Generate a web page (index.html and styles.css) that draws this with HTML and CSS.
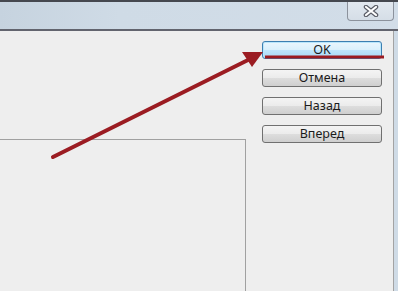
FILE: index.html
```html
<!DOCTYPE html>
<html lang="ru">
<head>
    <meta charset="UTF-8">
    <title>Диалог</title>
    <link rel="stylesheet" href="styles.css">
</head>
<body>
    <div class="window">
        <div class="titlebar">
            <button class="close-btn" aria-label="Закрыть">
                <svg width="16" height="12" viewBox="0 0 16 12">
                    <path d="M3 2 L13 10 M13 2 L3 10" stroke="#595c66" stroke-width="4.5" stroke-linecap="round"/>
                    <path d="M3 2 L13 10 M13 2 L3 10" stroke="#ffffff" stroke-width="2.2" stroke-linecap="round"/>
                </svg>
            </button>
        </div>
        <div class="content">
            <div class="left">
                <div class="panel"></div>
            </div>
            <div class="actions">
                <button class="btn btn-default">OK</button>
                <button class="btn">Отмена</button>
                <button class="btn">Назад</button>
                <button class="btn">Вперед</button>
            </div>
        </div>
    </div>

    <!-- стрелка-пометка поверх окна -->
    <svg class="annotation" width="398" height="291" viewBox="0 0 398 291">
        <line x1="265" y1="57" x2="384" y2="57" stroke="#9b1c22" stroke-width="3"/>
        <line x1="53" y1="157" x2="248" y2="60" stroke="#9b1c22" stroke-width="4" stroke-linecap="round"/>
        <polygon points="263,52 242,52 252,67" fill="#9b1c22"/>
    </svg>
</body>
</html>
```

FILE: styles.css
```css
body {
    margin: 0;
    width: 398px;
    height: 291px;
    overflow: hidden;
    font-family: "Noto Sans", Arial, sans-serif;
    background-color: #cfdbe6;
    position: relative;
}

.window {
    display: flex;
    flex-direction: column;
    height: 100%;
}

.titlebar {
    height: 27px;
    border-top: 2px solid #45484f;
    border-bottom: 2px solid #62646e;
    background: linear-gradient(90deg, #c6d3df 0%, #cfdbe6 30%, #d2dde8 100%);
    display: flex;
    justify-content: flex-end;
    padding-right: 4px;
}

.close-btn {
    width: 47px;
    height: 19px;
    padding: 0;
    border: 1px solid #8c929c;
    border-top: none;
    border-radius: 0 0 4px 4px;
    background: linear-gradient(#e2e8ef, #d5dee7);
    display: flex;
    align-items: center;
    justify-content: center;
}

.content {
    flex: 1;
    display: flex;
    background-color: #eeeeee;
    width: 393px;
    border-right: 1px solid #a3a3a3;
}

.left {
    width: 246px;
    padding-top: 108px;
}

.panel {
    height: 100%;
    border-top: 1px solid #a0a0a0;
    border-right: 1px solid #a0a0a0;
    margin-left: -1px;
}

.actions {
    display: flex;
    flex-direction: column;
    gap: 10px;
    padding-top: 10px;
    padding-left: 16px;
}

.btn {
    width: 120px;
    height: 18px;
    padding: 0;
    border: 1px solid #707070;
    border-radius: 3px;
    background: linear-gradient(#f4f4f4 0%, #ebebeb 50%, #dddddd 51%, #cfcfcf 100%);
    font-family: "Noto Sans", Arial, sans-serif;
    font-size: 12.5px;
    line-height: 16px;
    color: #1b1b1b;
}

.btn-default {
    border-color: #3c7fb1;
    background: linear-gradient(#eaf6fd 0%, #d9f0fc 50%, #bee6fd 51%, #a7d9f5 100%);
    box-shadow: inset 0 0 0 1px #b9e6fb;
}

/* пометка */
.annotation {
    position: absolute;
    left: 0;
    top: 0;
    pointer-events: none;
}
```
